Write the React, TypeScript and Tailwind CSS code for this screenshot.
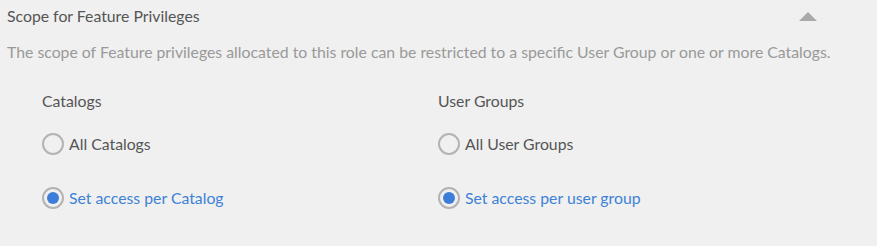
const catalogOptions = [
  { id: "all", label: "All Catalogs" },
  { id: "per", label: "Set access per Catalog" },
];

const groupOptions = [
  { id: "all", label: "All User Groups" },
  { id: "per", label: "Set access per user group" },
];

function Radio({ label, checked }: { label: string; checked: boolean }) {
  return (
    <label className="flex items-center h-[22px] cursor-pointer">
      <span className="flex items-center justify-center w-[22px] h-[22px] rounded-full border-2 border-[#b3b3b3] bg-[#f0f0f0]">
        {checked && <span className="w-[12px] h-[12px] rounded-full bg-[#3b7dd8]" />}
      </span>
      <span className={"ml-[5px] text-[15.8px] " + (checked ? "text-[#3d82d6]" : "text-[#555555]")}>{label}</span>
    </label>
  );
}

function ScopeColumn({ title, options }: { title: string; options: { id: string; label: string }[] }) {
  return (
    <div className="flex flex-col">
      <div className="text-[15.8px] text-[#555555] leading-[20px]">{title}</div>
      <div className="flex flex-col gap-[32px] mt-[22px]">
        {options.map((o) => (
          <Radio key={o.id} label={o.label} checked={o.id === "per"} />
        ))}
      </div>
    </div>
  );
}

export default function App() {
  return (
    <div className="w-[877px] h-[246px] bg-[#f0f0f0] font-['Lato',sans-serif] overflow-hidden">
      <div className="flex items-start justify-between pl-[7px] pr-[60px] pt-[6px]">
        <h3 className="text-[15.8px] text-[#555555] leading-[20px]">Scope for Feature Privileges</h3>
        <span className="mt-[6px] w-0 h-0 border-l-[9px] border-r-[9px] border-b-[9px] border-l-transparent border-r-transparent border-b-[#aaaaaa]" />
      </div>
      <p className="pl-[7px] mt-[16px] text-[15.8px] text-[#999999] leading-[20px]">
        The scope of Feature privileges allocated to this role can be restricted to a specific User Group or one or more Catalogs.
      </p>
      <div className="grid grid-cols-[396px_1fr] pl-[42px] mt-[29px]">
        <ScopeColumn title="Catalogs" options={catalogOptions} />
        <ScopeColumn title="User Groups" options={groupOptions} />
      </div>
    </div>
  );
}
